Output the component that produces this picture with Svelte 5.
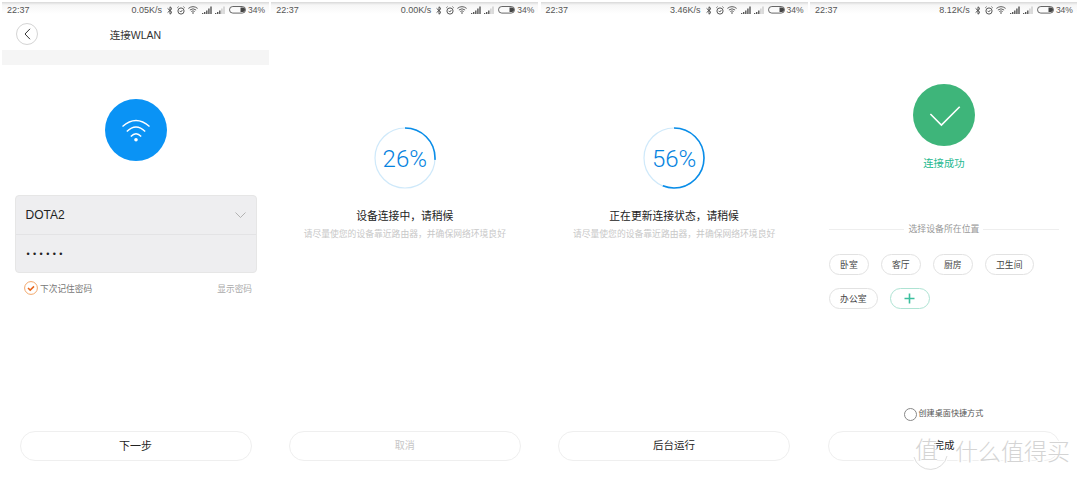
<script>
  const rooms = ['卧室', '客厅', '厨房', '卫生间', '办公室'];
  const C = 2 * Math.PI * 30;
</script>

{#snippet status(speed)}
  <div class="status">
    <span class="time">22:37</span>
    <div class="status-right">
      <span class="speed">{speed}</span>
      <svg class="bt" width="6" height="9" viewBox="0 0 6 9"><path d="M.6 2.4 5 6.4 3 8.2V.8l2 1.8L.6 6.6" fill="none" stroke="#444" stroke-width=".9"/></svg>
      <svg class="alarm" width="8" height="9" viewBox="0 0 8 9"><circle cx="4" cy="5" r="3.1" fill="none" stroke="#444" stroke-width=".9"/><path d="M2.6 4.8 3.8 6l1.6-2M.3 1.8 1.6.6M7.7 1.8 6.4.6" fill="none" stroke="#444" stroke-width=".8"/></svg>
      <svg class="wifi" width="10" height="8" viewBox="0 0 10 8"><path d="M.4 2.4Q5-1.1 9.6 2.4M1.9 4Q5 1.6 8.1 4M3.3 5.5Q5 4.2 6.7 5.5" fill="none" stroke="#444" stroke-width=".85"/><circle cx="5" cy="7" r=".8" fill="#444"/></svg>
      <svg class="sig" width="10" height="8" viewBox="0 0 10 8"><path d="M0 7h1.3v1H0zM2 6h1.4v2H2zM4.1 4.6h1.4V8H4.1zM6.2 2.6h1.4V8H6.2zM8.3 .5h1.4V8H8.3z" fill="#555"/></svg>
      <svg class="sig2" width="10" height="8" viewBox="0 0 10 8"><path d="M0 7h1.3v1H0zM2 6h1.4v2H2zM4.1 4.6h1.4V8H4.1z" fill="#555"/><path d="M6.2 2.6h1.4V8H6.2zM8.3 .5h1.4V8H8.3z" fill="#ccc"/></svg>
      <svg class="batt" width="18" height="8" viewBox="0 0 18 8"><rect x=".5" y=".5" width="16" height="6.6" rx="3.3" fill="none" stroke="#555" stroke-width=".9"/><path d="M11.5 1.6h2.4a2.2 2.2 0 0 1 0 4.4h-2.4z" fill="#444"/></svg>
      <span class="pct">34%</span>
    </div>
  </div>
{/snippet}

{#snippet ring(value)}
  <div class="ring">
    <svg width="62" height="62" viewBox="0 0 62 62">
      <circle cx="31" cy="31" r="30" fill="none" stroke="#cfe9fa" stroke-width="1.2"/>
      <circle cx="31" cy="31" r="30" fill="none" stroke="#0a8de8" stroke-width="1.6"
        stroke-dasharray="{C * value / 100} {C}" transform="rotate(-90 31 31)"/>
    </svg>
    <span class="ring-num">{value}%</span>
  </div>
{/snippet}

<div class="page">
  <section class="screen">
    {@render status('0.05K/s')}
    <header class="head">
      <span class="back">
        <svg width="7" height="12" viewBox="0 0 7 12"><path d="M6 .8 1 6l5 5.2" fill="none" stroke="#333" stroke-width="1"/></svg>
      </span>
      <h1>连接WLAN</h1>
    </header>
    <div class="band"></div>
    <div class="badge blue">
      <svg width="62" height="62" viewBox="0 0 62 62">
        <path d="M17.5 27.5Q31 15.5 44.5 27.5M21.8 32.6Q31 23.6 40.2 32.6M25.8 37.6Q31 32 36.2 37.6" fill="none" stroke="#fff" stroke-width="1.4"/>
        <circle cx="31" cy="40.8" r="1.8" fill="#fff"/>
      </svg>
    </div>
    <div class="card">
      <div class="row"><span class="ssid">DOTA2</span>
        <svg width="11" height="6" viewBox="0 0 11 6"><path d="M.5.5l5 5 5-5" fill="none" stroke="#aaa" stroke-width=".9"/></svg>
      </div>
      <div class="row"><span class="pw">••••••</span></div>
    </div>
    <div class="opts">
      <span class="remember">
        <span class="tick">
          <svg width="14" height="14" viewBox="0 0 14 14"><circle cx="7" cy="7" r="6.4" fill="none" stroke="#f2a76a" stroke-width="1"/><path d="M4 7l2.2 2.1L10 5.4" fill="none" stroke="#e8641a" stroke-width="1.5"/></svg>
        </span>
        下次记住密码
      </span>
      <span class="show">显示密码</span>
    </div>
    <button class="btn next">下一步</button>
  </section>

  <section class="screen">
    {@render status('0.00K/s')}
    {@render ring(26)}
    <p class="title">设备连接中，请稍候</p>
    <p class="sub">请尽量使您的设备靠近路由器，并确保网络环境良好</p>
    <button class="btn off">取消</button>
  </section>

  <section class="screen">
    {@render status('3.46K/s')}
    {@render ring(56)}
    <p class="title">正在更新连接状态，请稍候</p>
    <p class="sub">请尽量使您的设备靠近路由器，并确保网络环境良好</p>
    <button class="btn">后台运行</button>
  </section>

  <section class="screen">
    {@render status('8.12K/s')}
    <div class="badge green">
      <svg width="62" height="62" viewBox="0 0 62 62"><path d="M17.4 30 28.4 41 46.7 22.7" fill="none" stroke="#fff" stroke-width="1.6"/></svg>
    </div>
    <p class="ok">连接成功</p>
    <div class="divider"><span>选择设备所在位置</span></div>
    <div class="chips">
      {#each rooms as r}<span class="chip">{r}</span>{/each}
      <span class="chip add">
        <svg width="11" height="11" viewBox="0 0 11 11"><path d="M5.5.5v10M.5 5.5h10" stroke="#3cbf9e" stroke-width="1.6"/></svg>
      </span>
    </div>
    <div class="shortcut"><span class="radio"></span>创建桌面快捷方式</div>
    <button class="btn last">完成</button>
  </section>

  <div class="mark">
    <svg width="40" height="38" viewBox="0 0 40 38"><path d="M4 21A17 17 0 0 0 37 20" fill="none" stroke="#fff" stroke-width="3"/><path d="M4 21A17 17 0 0 0 37 20" fill="none" stroke="#ddd" stroke-width="1"/></svg>
    <span class="mark-zhi">值</span>
    <span class="mark-text">什么值得买</span>
  </div>
</div>

<style>
  :global(body) { margin: 0; background: #fff; }
  .page {
    position: relative;
    display: flex;
    gap: 2.3px;
    width: 1080px;
    height: 479px;
    padding-left: 2px;
    box-sizing: border-box;
    overflow: hidden;
    font-family: "Liberation Sans", "Noto Sans CJK SC", sans-serif;
    color: #222;
  }
  .screen {
    width: 267px;
    height: 479px;
    flex: none;
    display: flex;
    flex-direction: column;
    align-items: center;
  }
  .status {
    align-self: stretch;
    box-sizing: border-box;
    margin-top: 2px;
    height: 18px;
    padding: 0 4px 2px 5px;
    display: flex;
    justify-content: space-between;
    align-items: center;
    font-size: 9px;
    color: #555;
    background: linear-gradient(#d8d8d8, #f6f6f6 3px, #fff 12px);
  }
  .status-right { display: flex; align-items: center; }
  .bt { margin-left: 5px; }
  .alarm { margin-left: 4px; }
  .wifi { margin-left: 3px; }
  .sig { margin-left: 4px; }
  .sig2 { margin-left: 3px; }
  .batt { margin-left: 4px; }
  .pct { margin-left: 1px; font-size: 8.5px; }

  .head {
    position: relative;
    align-self: stretch;
    height: 30px;
    box-sizing: border-box;
    padding-bottom: 2px;
    display: flex;
    align-items: center;
    justify-content: center;
  }
  .head h1 { margin: 0; font-size: 10.5px; font-weight: 400; color: #333; }
  .back {
    position: absolute;
    left: 14px;
    top: 3px;
    width: 22px;
    height: 22px;
    box-sizing: border-box;
    border: 1px solid #d4d4d4;
    border-radius: 50%;
    display: flex;
    align-items: center;
    justify-content: center;
  }
  .band { align-self: stretch; height: 15px; background: #f5f5f5; }
  .badge { width: 62px; height: 62px; border-radius: 50%; }
  .badge svg { display: block; }
  .blue { background: #0a93f5; margin-top: 34px; }
  .green { background: #3eb57a; margin: 64px 0 0 1px; }

  .card {
    margin-top: 34px;
    width: 242px;
    box-sizing: border-box;
    background: #eeeef0;
    border: 1px solid #e6e6e6;
    border-radius: 4px;
  }
  .row {
    height: 38px;
    padding: 0 10px;
    display: flex;
    align-items: center;
    justify-content: space-between;
  }
  .row + .row { height: 37px; border-top: 1px solid #e3e3e5; }
  .ssid { font-size: 12px; color: #222; }
  .pw { font-size: 9px; letter-spacing: 3.4px; color: #222; padding-left: 1px; }
  .opts {
    align-self: stretch;
    margin: 8px 17px 0 22px;
    display: flex;
    justify-content: space-between;
    align-items: center;
    font-size: 8.7px;
    color: #777;
  }
  .remember { display: flex; align-items: center; gap: 2px; }
  .tick { display: flex; }
  .show { color: #aaa; }

  .btn {
    margin-top: auto;
    margin-bottom: 18px;
    width: 232px;
    height: 30px;
    flex: none;
    background: #fff;
    border: 1px solid #efefef;
    border-radius: 16px;
    font: inherit;
    font-size: 10.5px;
    color: #222;
    padding: 0 0 3px;
  }
  .btn.next { font-size: 11px; }
  .btn.off { color: #c6c6c6; font-size: 10px; }
  .btn.last { margin-top: 10px; margin-left: 1px; }

  .ring { position: relative; margin-top: 107px; width: 62px; height: 62px; }
  .ring svg { display: block; }
  .ring-num {
    position: absolute;
    inset: 0;
    padding-top: 1px;
    display: flex;
    align-items: center;
    justify-content: center;
    font-family: Roboto, sans-serif;
    font-weight: 300;
    font-size: 24px;
    color: #0583e0;
  }
  .title { margin: 20px 0 0; font-size: 10.8px; line-height: 15px; color: #222; }
  .sub { margin: 3px 0 0; font-size: 8.8px; line-height: 14px; color: #c8c8c8; }

  .ok { margin: 11px 0 0 1px; font-size: 10.3px; line-height: 14px; color: #25b98f; }
  .divider {
    align-self: stretch;
    margin: 51px 18px 0 19px;
    display: flex;
    align-items: center;
    gap: 4px;
    font-size: 8.9px;
    line-height: 14px;
    color: #999;
  }
  .divider::before, .divider::after { content: ""; flex: 1; height: 1px; background: #eeeeee; }
  .chips {
    align-self: stretch;
    margin: 18px 19px 0;
    display: flex;
    flex-wrap: wrap;
    gap: 13px 12px;
  }
  .chip {
    height: 21px;
    box-sizing: border-box;
    padding: 0 10.2px;
    border: 1px solid #e2e2e2;
    border-radius: 11px;
    display: flex;
    align-items: center;
    font-size: 8.8px;
    color: #444;
  }
  .add { width: 40px; justify-content: center; padding: 0; border-color: #aee3d3; }
  .shortcut {
    margin-top: auto;
    display: flex;
    align-items: center;
    gap: 2px;
    font-size: 8.1px;
    line-height: 14px;
    color: #555;
  }
  .radio { width: 13px; height: 13px; box-sizing: border-box; border: 1px solid #888; border-radius: 50%; }

  .mark { position: absolute; left: 910px; top: 436px; width: 165px; height: 38px; }
  .mark svg { position: absolute; left: 0; top: 0; }
  .mark-zhi, .mark-text {
    position: absolute;
    font-weight: 300;
    color: #d4d4d4;
    text-shadow: 1px 0 0 #fff, -1px 0 0 #fff, 0 1px 0 #fff, 0 -1px 0 #fff, 2px 0 1px #fff, -2px 0 1px #fff;
    line-height: 1;
  }
  .mark-zhi { left: 5px; top: 3px; font-size: 23px; }
  .mark-text { left: 45px; top: 5px; font-size: 23px; }
</style>
